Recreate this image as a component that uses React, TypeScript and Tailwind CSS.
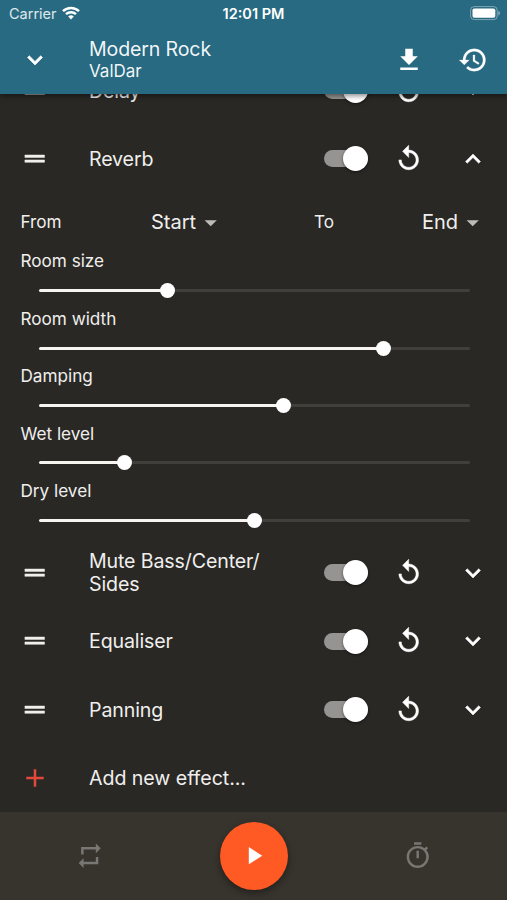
import type { ReactNode } from "react";
import {
  MdAdd,
  MdArrowDropDown,
  MdDragHandle,
  MdFileDownload,
  MdHistory,
  MdKeyboardArrowDown,
  MdKeyboardArrowUp,
  MdOutlineTimer,
  MdPlayArrow,
  MdRepeat,
  MdReplay,
} from "react-icons/md";

const sliders = [
  { label: "Room size", value: 30 },
  { label: "Room width", value: 80 },
  { label: "Damping", value: 56.8 },
  { label: "Wet level", value: 20 },
  { label: "Dry level", value: 50 },
];

function StatusBar() {
  return (
    <div className="flex h-[25px] items-center justify-between pt-[3px] pr-[7px] pl-[9px]">
      <div className="flex w-[100px] items-center gap-[5px] text-[14.5px] text-white/85">
        Carrier
        <svg width="18" height="14" viewBox="0 0 18 14" fill="none" stroke="white" className="-mt-[2px]">
          <path d="M1 5.2a11.4 11.4 0 0 1 16 0" strokeWidth="2.5" />
          <path d="M4 8.2a7.2 7.2 0 0 1 10 0" strokeWidth="2.4" />
          <path d="M9 13.5 6.2 10.6a4 4 0 0 1 5.6 0Z" fill="white" stroke="none" />
        </svg>
      </div>
      <span className="-ml-[2px] text-[14.5px] font-semibold text-white">12:01 PM</span>
      <div className="-mt-[2px] flex w-[100px] justify-end">
        <svg width="30" height="15" viewBox="0 0 30 15">
          <rect x="0.6" y="0.6" width="26.6" height="13" rx="3.6" fill="none" stroke="white" strokeOpacity="0.4" />
          <rect x="2.5" y="2.5" width="22.8" height="9.2" rx="1.8" fill="white" />
          <path d="M28.4 5v4.4c1-.4 1.5-1.2 1.5-2.2s-.5-1.8-1.5-2.2Z" fill="white" fillOpacity="0.5" />
        </svg>
      </div>
    </div>
  );
}

function Header() {
  return (
    <header className="relative z-10 h-[94px] bg-[#286a82] text-white shadow-[0_2px_5px_rgba(0,0,0,0.45)]">
      <StatusBar />
      <div className="flex h-[69px] items-center">
        <div className="flex w-[89px] pl-[20px]">
          <MdKeyboardArrowDown size={30} strokeWidth={0.5} />
        </div>
        <div className="flex-1 pb-[2px] text-white/95">
          <div className="text-[19.6px] leading-[24px] tracking-[-0.15px]">Modern Rock</div>
          <div className="text-[17px] leading-[20px]">ValDar</div>
        </div>
        <MdFileDownload size={30} className="mr-[34px]" />
        <MdHistory size={30} strokeWidth={0.2} className="mr-[19px]" />
      </div>
    </header>
  );
}

function Switch() {
  return (
    <div className="flex h-[17px] w-[44px] items-center justify-end rounded-full bg-[#959492]">
      <div className="size-[25px] shrink-0 rounded-full bg-white shadow-[0_1px_3px_rgba(0,0,0,0.5)]" />
    </div>
  );
}

function EffectRow({ title, open = false }: { title: ReactNode; open?: boolean }) {
  return (
    <div className="flex h-[68.5px] items-center text-white">
      <div className="w-[89px] pl-[20px] text-[#f0efed]">
        <MdDragHandle size={29.4} strokeWidth={0.4} />
      </div>
      <div className="flex-1 pt-[1.3px] text-[19.6px] leading-[23px] tracking-[-0.13px] text-[#f0efed]">
        {title}
      </div>
      <Switch />
      <MdReplay size={29.4} strokeWidth={0.4} className="mr-[34.2px] ml-[26.4px]" />
      {open ? (
        <MdKeyboardArrowUp size={30} strokeWidth={0.4} className="mr-[19px]" />
      ) : (
        <MdKeyboardArrowDown size={30} strokeWidth={0.4} className="mr-[19px]" />
      )}
    </div>
  );
}

function Slider({ label, value }: { label: string; value: number }) {
  return (
    <div className="h-[57.4px]">
      <div className="pl-[20.5px] text-[17.15px] leading-[20.6px] text-[#f0efed]">{label}</div>
      <div className="mr-[37.5px] ml-[38.5px] flex h-[37.4px] items-center">
        <div className="h-[3px] rounded-l-full bg-[#f7f5f0]" style={{ width: `${value}%` }} />
        <div className="relative -mx-[7.5px] size-[15px] shrink-0 rounded-full bg-white" />
        <div className="h-[3px] flex-1 rounded-r-full bg-[#403f3c]" />
      </div>
    </div>
  );
}

function RangeRow() {
  return (
    <div className="flex h-[58.2px] items-center text-[17.15px] text-[#f0efed]">
      <span className="w-[130px] pl-[20.5px]">From</span>
      <div className="flex w-[184px] items-center pl-[21px] text-[20px]">
        Start
        <MdArrowDropDown size={29.4} className="text-[#bdbcba]" />
      </div>
      <span className="flex-1">To</span>
      <div className="mr-[19.5px] flex items-center text-[20px]">
        End
        <MdArrowDropDown size={29.4} className="text-[#bdbcba]" />
      </div>
    </div>
  );
}

function PlayerBar() {
  return (
    <footer className="flex h-[88px] items-center justify-between bg-[#37342e] px-[75px] text-[#797774]">
      <MdRepeat size={29.4} />
      <button className="flex size-[68px] items-center justify-center rounded-full bg-[#ff5924] text-white shadow-[0_3px_7px_rgba(0,0,0,0.4)]">
        <MdPlayArrow size={29.4} />
      </button>
      <MdOutlineTimer size={29.4} />
    </footer>
  );
}

function App() {
  return (
    // The icons carry an empty bounding path, which must not take the stroke
    <div className="flex h-[900px] w-[507px] flex-col overflow-hidden bg-[#292825] font-['Inter',sans-serif] [&_path[fill='none']]:stroke-none">
      <Header />
      <main className="min-h-0 flex-1 overflow-hidden">
        {/* Scrolled so that the first effect is half under the header */}
        <div className="-mt-[37.8px]">
          <EffectRow title="Delay" />
          <EffectRow title="Reverb" open />
          <RangeRow />
          {sliders.map((slider) => (
            <Slider key={slider.label} {...slider} />
          ))}
          <EffectRow
            title={
              <>
                Mute Bass/Center/
                <br />
                Sides
              </>
            }
          />
          <EffectRow title="Equaliser" />
          <EffectRow title="Panning" />
          <div className="flex h-[68.5px] items-center">
            <div className="w-[89px] pl-[20px] text-[#e2483c]">
              <MdAdd size={30} />
            </div>
            <span className="pt-[1px] text-[19.6px] tracking-[-0.05px] text-[#f0efed]">Add new effect...</span>
          </div>
        </div>
      </main>
      <PlayerBar />
    </div>
  );
}

export default App;
